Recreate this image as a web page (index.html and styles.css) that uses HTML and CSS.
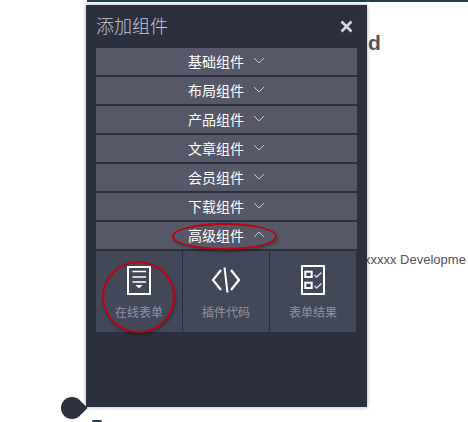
FILE: index.html

```html
<!DOCTYPE html>
<html lang="zh-CN">
<head>
    <meta charset="UTF-8">
    <meta name="viewport" content="width=device-width, initial-scale=1.0">
    <title>添加组件</title>
    <link rel="stylesheet" href="styles.css">
</head>
<body>
    <div class="topbar"></div>

    <!-- page behind the panel -->
    <div class="bg-title">d</div>
    <div class="bg-text">xxxxx Developme</div>
    <div class="bg-dot"></div>
    <div class="bg-stub"></div>

    <div class="panel">
        <div class="panel-head">
            <h1>添加组件</h1>
            <svg class="close" width="13" height="13" viewBox="0 0 13 13">
                <path d="M1.5 1.5L11.5 11.5M11.5 1.5L1.5 11.5" stroke="#d5d7e0" stroke-width="2.6" fill="none"/>
            </svg>
        </div>
        <div class="groups">
            <div class="group">基础组件<svg class="arrow" width="12" height="7" viewBox="0 0 12 7"><path d="M1 1L6 6L11 1" stroke="#c4c6d0" fill="none"/></svg></div>
            <div class="group">布局组件<svg class="arrow" width="12" height="7" viewBox="0 0 12 7"><path d="M1 1L6 6L11 1" stroke="#c4c6d0" fill="none"/></svg></div>
            <div class="group">产品组件<svg class="arrow" width="12" height="7" viewBox="0 0 12 7"><path d="M1 1L6 6L11 1" stroke="#c4c6d0" fill="none"/></svg></div>
            <div class="group">文章组件<svg class="arrow" width="12" height="7" viewBox="0 0 12 7"><path d="M1 1L6 6L11 1" stroke="#c4c6d0" fill="none"/></svg></div>
            <div class="group">会员组件<svg class="arrow" width="12" height="7" viewBox="0 0 12 7"><path d="M1 1L6 6L11 1" stroke="#c4c6d0" fill="none"/></svg></div>
            <div class="group">下载组件<svg class="arrow" width="12" height="7" viewBox="0 0 12 7"><path d="M1 1L6 6L11 1" stroke="#c4c6d0" fill="none"/></svg></div>
            <div class="group">高级组件<svg class="arrow" width="12" height="7" viewBox="0 0 12 7"><path d="M1 6L6 1L11 6" stroke="#c4c6d0" fill="none"/></svg></div>
        </div>
        <div class="items">
            <div class="item">
                <svg width="24" height="29" viewBox="0 0 24 29">
                    <rect x="1" y="1" width="22" height="27" fill="none" stroke="#fff" stroke-width="2"/>
                    <path d="M5.5 5.5H19M5.5 11H19M5.5 16H19" stroke="#fff" stroke-width="1.6"/>
                    <path d="M8.5 19H15.5L12 22.5Z" fill="#fff"/>
                </svg>
                <span>在线表单</span>
            </div>
            <div class="item">
                <svg width="30" height="29" viewBox="0 0 30 29">
                    <path d="M10 4L2 14L10 24M20 4L28 14L20 24" stroke="#fff" stroke-width="2.2" fill="none"/>
                    <path d="M13.5 1.5L16.5 26.5" stroke="#fff" stroke-width="2"/>
                </svg>
                <span>插件代码</span>
            </div>
            <div class="item">
                <svg width="24" height="30" viewBox="0 0 24 30">
                    <rect x="1" y="1" width="22" height="28" fill="none" stroke="#fff" stroke-width="2"/>
                    <rect x="4.3" y="6.7" width="6.4" height="5.3" fill="none" stroke="#fff" stroke-width="2"/>
                    <rect x="4.3" y="17.7" width="6.4" height="5.3" fill="none" stroke="#fff" stroke-width="2"/>
                    <path d="M13.5 10L15.5 12L20.5 7.5M13.5 21L15.5 23L20.5 18.5" stroke="#d5d7e0" stroke-width="1.5" fill="none"/>
                </svg>
                <span>表单结果</span>
            </div>
        </div>
    </div>

    <!-- red hand-drawn marks -->
    <div class="mark mark-row"></div>
    <div class="mark mark-item"></div>
</body>
</html>
```

FILE: styles.css

```css
html, body {
    margin: 0;
    padding: 0;
}

body {
    width: 468px;
    height: 422px;
    overflow: hidden;
    background: #fff;
    font-family: "Noto Sans CJK SC", "Liberation Sans", sans-serif;
}

.topbar {
    height: 2px;
    margin-left: 87px;
    background: #1d3f58;
}

.bg-title {
    position: absolute;
    left: 368px;
    top: 31px;
    font: bold 21px "Liberation Sans", sans-serif;
    color: #555;
}

.bg-text {
    position: absolute;
    left: 364px;
    top: 252px;
    font: 13px "Liberation Sans", sans-serif;
    color: #555;
    white-space: nowrap;
}

.bg-dot {
    position: absolute;
    left: 61px;
    top: 397px;
    width: 22px;
    height: 22px;
    background: #2c2f3e;
    border-radius: 50% 0 50% 50%;
    transform: rotate(45deg);
}

.bg-stub {
    position: absolute;
    left: 92px;
    top: 420px;
    width: 10px;
    height: 2px;
    background: #1d3f58;
    border-radius: 5px 5px 0 0;
}

.panel {
    position: absolute;
    left: 86px;
    top: 5px;
    width: 281px;
    height: 402px;
    box-sizing: border-box;
    padding: 0 10px;
    background: #2c2f3e;
    box-shadow: 0 0 4px rgba(0, 0, 0, 0.35);
}

.panel-head {
    display: flex;
    align-items: center;
    justify-content: space-between;
    height: 43px;
    padding-right: 4px;
}

.panel-head h1 {
    margin: 0 0 3px;
    font-size: 18px;
    font-weight: 300;
    color: #c3c6d4;
}

.close {
    margin-top: -1px;
}

.groups {
    display: flex;
    flex-direction: column;
    gap: 2px;
}

.group {
    display: flex;
    align-items: center;
    justify-content: center;
    gap: 9px;
    height: 27px;
    box-sizing: border-box;
    padding-bottom: 2px;
    background: #565867;
    color: #fff;
    font-size: 14px;
}

.items {
    display: flex;
    gap: 1px;
    margin-top: 2px;
    width: 260px;
}

.item {
    flex: 1;
    height: 81px;
    display: flex;
    flex-direction: column;
    align-items: center;
    justify-content: flex-end;
    gap: 8px;
    padding-bottom: 12px;
    box-sizing: border-box;
    background: #434859;
    color: #8f92a1;
    font-size: 12px;
}

.mark {
    position: absolute;
    box-sizing: border-box;
    border: 2.5px solid #c00010;
    border-radius: 50%;
    box-shadow: 1px 2px 3px rgba(0, 0, 0, 0.3);
}

.mark-row {
    left: 172px;
    top: 223px;
    width: 105px;
    height: 27px;
}

.mark-item {
    left: 102px;
    top: 261px;
    width: 73px;
    height: 72px;
}
```
